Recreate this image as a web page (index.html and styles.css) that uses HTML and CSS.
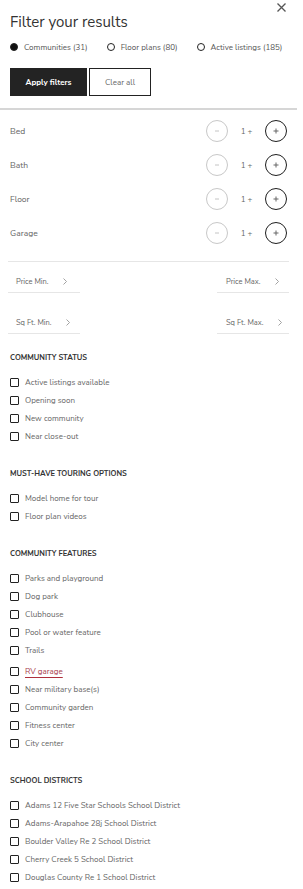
FILE: index.html
```html
<!DOCTYPE html>
<html lang="en">
<head>
    <meta charset="UTF-8">
    <meta name="viewport" content="width=device-width, initial-scale=1.0">
    <title>Filter your results</title>
    <link rel="stylesheet" href="styles.css">
</head>
<body>
    <div class="panel">
        <header class="panel-head">
            <div class="close-row">
                <button class="close-btn" aria-label="Close">
                    <svg width="9" height="9" viewBox="0 0 9 9"><path d="M0.5 0.5 L8.5 8.5 M8.5 0.5 L0.5 8.5" stroke="#555" stroke-width="1.3" fill="none"/></svg>
                </button>
            </div>
            <h1 class="title">Filter your results</h1>
            <div class="scope">
                <label class="scope-opt"><span class="radio is-on"></span>Communities (31)</label>
                <label class="scope-opt"><span class="radio"></span>Floor plans (80)</label>
                <label class="scope-opt"><span class="radio"></span>Active listings (185)</label>
            </div>
            <div class="actions">
                <button class="btn btn-dark">Apply filters</button>
                <button class="btn btn-line">Clear all</button>
            </div>
        </header>

        <section class="counters">
            <div class="counter-row">
                <span class="counter-label">Bed</span>
                <div class="stepper">
                    <span class="step step-off"><svg width="6" height="6" viewBox="0 0 6 6"><path d="M1 3 H5" stroke="#c4c4c4" stroke-width="1"/></svg></span>
                    <span class="step-val">1 +</span>
                    <span class="step step-on"><svg width="6" height="6" viewBox="0 0 6 6"><path d="M0.5 3 H5.5 M3 0.5 V5.5" stroke="#666" stroke-width="1"/></svg></span>
                </div>
            </div>
            <div class="counter-row">
                <span class="counter-label">Bath</span>
                <div class="stepper">
                    <span class="step step-off"><svg width="6" height="6" viewBox="0 0 6 6"><path d="M1 3 H5" stroke="#c4c4c4" stroke-width="1"/></svg></span>
                    <span class="step-val">1 +</span>
                    <span class="step step-on"><svg width="6" height="6" viewBox="0 0 6 6"><path d="M0.5 3 H5.5 M3 0.5 V5.5" stroke="#666" stroke-width="1"/></svg></span>
                </div>
            </div>
            <div class="counter-row">
                <span class="counter-label">Floor</span>
                <div class="stepper">
                    <span class="step step-off"><svg width="6" height="6" viewBox="0 0 6 6"><path d="M1 3 H5" stroke="#c4c4c4" stroke-width="1"/></svg></span>
                    <span class="step-val">1 +</span>
                    <span class="step step-on"><svg width="6" height="6" viewBox="0 0 6 6"><path d="M0.5 3 H5.5 M3 0.5 V5.5" stroke="#666" stroke-width="1"/></svg></span>
                </div>
            </div>
            <div class="counter-row">
                <span class="counter-label">Garage</span>
                <div class="stepper">
                    <span class="step step-off"><svg width="6" height="6" viewBox="0 0 6 6"><path d="M1 3 H5" stroke="#c4c4c4" stroke-width="1"/></svg></span>
                    <span class="step-val">1 +</span>
                    <span class="step step-on"><svg width="6" height="6" viewBox="0 0 6 6"><path d="M0.5 3 H5.5 M3 0.5 V5.5" stroke="#666" stroke-width="1"/></svg></span>
                </div>
            </div>
        </section>

        <section class="ranges">
            <div class="range-row">
                <div class="range-field">Price Min.<svg class="chev" width="4" height="7" viewBox="0 0 4 7"><path d="M0.5 0.5 L3.5 3.5 L0.5 6.5" stroke="#999" stroke-width="0.9" fill="none"/></svg></div>
                <div class="range-field">Price Max.<svg class="chev" width="4" height="7" viewBox="0 0 4 7"><path d="M0.5 0.5 L3.5 3.5 L0.5 6.5" stroke="#999" stroke-width="0.9" fill="none"/></svg></div>
            </div>
            <div class="range-row">
                <div class="range-field">Sq Ft. Min.<svg class="chev" width="4" height="7" viewBox="0 0 4 7"><path d="M0.5 0.5 L3.5 3.5 L0.5 6.5" stroke="#999" stroke-width="0.9" fill="none"/></svg></div>
                <div class="range-field">Sq Ft. Max.<svg class="chev" width="4" height="7" viewBox="0 0 4 7"><path d="M0.5 0.5 L3.5 3.5 L0.5 6.5" stroke="#999" stroke-width="0.9" fill="none"/></svg></div>
            </div>
        </section>

        <section class="group">
            <h2 class="group-title">Community status</h2>
            <ul class="check-list">
                <li class="check"><span class="box"></span>Active listings available</li>
                <li class="check"><span class="box"></span>Opening soon</li>
                <li class="check"><span class="box"></span>New community</li>
                <li class="check"><span class="box"></span>Near close-out</li>
            </ul>
        </section>

        <section class="group">
            <h2 class="group-title">Must-have touring options</h2>
            <ul class="check-list">
                <li class="check"><span class="box"></span>Model home for tour</li>
                <li class="check"><span class="box"></span>Floor plan videos</li>
            </ul>
        </section>

        <section class="group">
            <h2 class="group-title">Community features</h2>
            <ul class="check-list">
                <li class="check"><span class="box"></span>Parks and playground</li>
                <li class="check"><span class="box"></span>Dog park</li>
                <li class="check"><span class="box"></span>Clubhouse</li>
                <li class="check"><span class="box"></span>Pool or water feature</li>
                <li class="check"><span class="box"></span>Trails</li>
                <li class="check is-hover"><span class="box"></span><span class="check-text">RV garage</span></li>
                <li class="check"><span class="box"></span>Near military base(s)</li>
                <li class="check"><span class="box"></span>Community garden</li>
                <li class="check"><span class="box"></span>Fitness center</li>
                <li class="check"><span class="box"></span>City center</li>
            </ul>
        </section>

        <section class="group">
            <h2 class="group-title">School districts</h2>
            <ul class="check-list">
                <li class="check"><span class="box"></span>Adams 12 Five Star Schools School District</li>
                <li class="check"><span class="box"></span>Adams-Arapahoe 28j School District</li>
                <li class="check"><span class="box"></span>Boulder Valley Re 2 School District</li>
                <li class="check"><span class="box"></span>Cherry Creek 5 School District</li>
                <li class="check"><span class="box"></span>Douglas County Re 1 School District</li>
            </ul>
        </section>
    </div>
</body>
</html>
```

FILE: styles.css
```css
body {
    margin: 0;
    background: #fff;
    font-family: "Nunito Sans", Lato, "Open Sans", sans-serif;
    color: #666;
}
.panel {
    width: 297px;
}
.panel-head {
    padding: 0 0 12px 10px;
    border-bottom: 2px solid #d6d6d6;
}
.close-row {
    display: flex;
    justify-content: flex-end;
    height: 13px;
    padding-right: 11px;
}
.close-btn {
    border: 0;
    background: none;
    padding: 0;
    margin-top: 3px;
    width: 9px;
    height: 9px;
    display: block;
}
.close-btn svg {
    display: block;
}
.title {
    margin: 0;
    font-size: 15px;
    line-height: 18px;
    font-weight: 400;
    color: #333;
}
.scope {
    display: flex;
    gap: 19px;
    margin-top: 8px;
    height: 16px;
    align-items: center;
}
.scope-opt {
    display: flex;
    align-items: center;
    gap: 6px;
    font-size: 8px;
    color: #555;
}
.radio {
    width: 6px;
    height: 6px;
    border: 1.3px solid #222;
    border-radius: 50%;
}
.radio.is-on {
    background: #111;
}
.actions {
    display: flex;
    gap: 2px;
    margin-top: 13px;
}
.btn {
    height: 28px;
    font-family: inherit;
    font-size: 8px;
    padding: 0;
    cursor: pointer;
}
.btn-dark {
    width: 77px;
    background: #232323;
    border: 0;
    color: #fff;
    font-weight: 700;
}
.btn-line {
    width: 62px;
    background: #fff;
    border: 1px solid #222;
    color: #666;
}
.counters {
    padding: 4px 10px 0;
}
.counter-row {
    display: flex;
    justify-content: space-between;
    align-items: center;
    height: 34px;
}
.counter-label {
    font-size: 8.5px;
    color: #666;
}
.stepper {
    display: flex;
    align-items: center;
}
.step {
    width: 22px;
    height: 22px;
    box-sizing: border-box;
    border-radius: 50%;
    display: flex;
    align-items: center;
    justify-content: center;
}
.step svg {
    display: block;
}
.step-off {
    border: 1px solid #c8c8c8;
}
.step-on {
    border: 1.2px solid #1e1e1e;
}
.step-val {
    width: 37px;
    text-align: center;
    font-size: 8px;
    color: #666;
}
.ranges {
    margin: 11px 8px 0;
    border-top: 1px solid #e6e6e6;
    padding-top: 8px;
}
.range-row {
    display: flex;
    justify-content: space-between;
}
.range-row + .range-row {
    margin-top: 18px;
}
.range-field {
    width: 72px;
    height: 22px;
    box-sizing: content-box;
    border-bottom: 1px solid #e6e6e6;
    display: flex;
    align-items: center;
    padding-left: 8px;
    margin-left: 0;
    font-size: 7.5px;
    color: #666;
}
.range-row .range-field:first-child {
    width: 64px;
}
.range-row .range-field:last-child {
    width: 63px;
    padding-left: 9px;
}
.chev {
    display: block;
    margin-left: 14px;
}
.group {
    margin-top: 23px;
    padding-left: 10px;
}
.ranges + .group {
    margin-top: 18px;
}
.group-title {
    margin: 0 0 9px;
    font-size: 7.5px;
    line-height: 12px;
    font-weight: 700;
    text-transform: uppercase;
    color: #333;
}
.check-list {
    list-style: none;
    margin: 0;
    padding: 0;
}
.check {
    display: flex;
    align-items: center;
    gap: 6px;
    height: 18px;
    font-size: 8px;
    color: #666;
}
.box {
    width: 9px;
    height: 9px;
    box-sizing: border-box;
    border: 1px solid #222;
    border-radius: 1px;
    flex: none;
}
.check.is-hover {
    margin-top: 3px;
}
.check-text {
    color: #a8404c;
    text-decoration: underline;
    text-decoration-color: #b0303c;
    text-underline-offset: 3px;
}
```
